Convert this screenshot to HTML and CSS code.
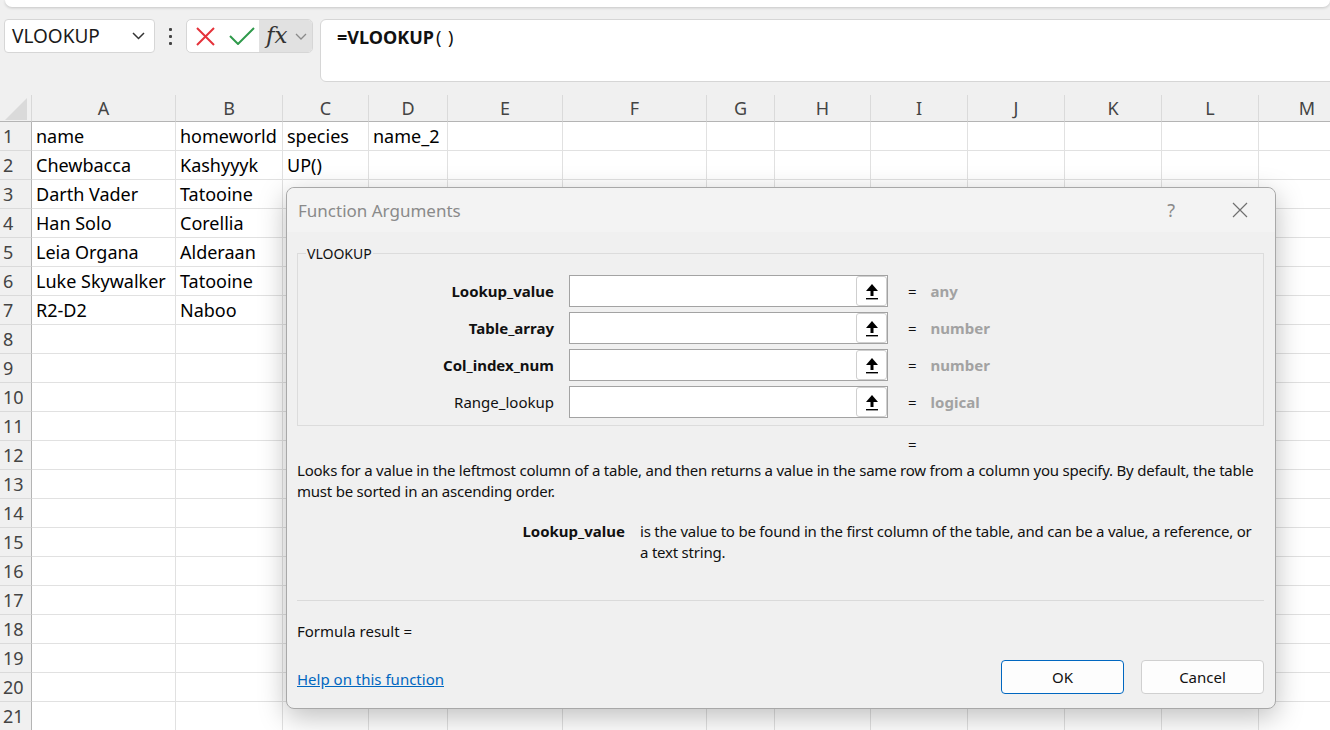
FILE: index.html
```html
<!DOCTYPE html>
<html lang="en">
<head>
<meta charset="utf-8">
<title>VLOOKUP - Function Arguments</title>
<link rel="stylesheet" href="styles.css">
</head>
<body>
<div class="topbar"></div>

<div class="fbar">
  <div class="namebox">
    <span>VLOOKUP</span>
    <svg class="chev" width="13" height="8" viewBox="0 0 13 8"><polyline points="1,1 6.5,6.5 12,1" fill="none" stroke="#333" stroke-width="1.5"/></svg>
  </div>
  <div class="kebab"><span></span><span></span><span></span></div>
  <div class="fbtns">
    <div class="fb-x"><svg width="19" height="19" viewBox="0 0 19 19"><path d="M1 1 L18 18 M18 1 L1 18" stroke="#e5323a" stroke-width="2" fill="none"/></svg></div>
    <div class="fb-ok"><svg width="26" height="18" viewBox="0 0 26 18"><polyline points="1,9 9,17 25,1" fill="none" stroke="#2f9a4b" stroke-width="2"/></svg></div>
    <div class="fb-fx"><span class="fx">fx</span><svg width="12" height="7" viewBox="0 0 12 7"><polyline points="1,1 6,6 11,1" fill="none" stroke="#8a8a8a" stroke-width="1.3"/></svg></div>
  </div>
  <div class="finput"><b>=VLOOKUP</b><span class="paren">( )</span></div>
</div>

<div class="sheet">
  <div class="corner"><svg width="22" height="22" viewBox="0 0 22 22"><polygon points="0,22 22,0 22,22" fill="#dadada"/></svg></div>
  <div class="ch">A</div><div class="ch">B</div><div class="ch">C</div><div class="ch">D</div><div class="ch">E</div><div class="ch">F</div><div class="ch">G</div><div class="ch">H</div><div class="ch">I</div><div class="ch">J</div><div class="ch">K</div><div class="ch">L</div><div class="ch">M</div>

  <div class="rh">1</div><div>name</div><div>homeworld</div><div>species</div><div>name_2</div><div></div><div></div><div></div><div></div><div></div><div></div><div></div><div></div><div></div>
  <div class="rh">2</div><div>Chewbacca</div><div>Kashyyyk</div><div>UP()</div><div></div><div></div><div></div><div></div><div></div><div></div><div></div><div></div><div></div><div></div>
  <div class="rh">3</div><div>Darth Vader</div><div>Tatooine</div><div></div><div></div><div></div><div></div><div></div><div></div><div></div><div></div><div></div><div></div><div></div>
  <div class="rh">4</div><div>Han Solo</div><div>Corellia</div><div></div><div></div><div></div><div></div><div></div><div></div><div></div><div></div><div></div><div></div><div></div>
  <div class="rh">5</div><div>Leia Organa</div><div>Alderaan</div><div></div><div></div><div></div><div></div><div></div><div></div><div></div><div></div><div></div><div></div><div></div>
  <div class="rh">6</div><div>Luke Skywalker</div><div>Tatooine</div><div></div><div></div><div></div><div></div><div></div><div></div><div></div><div></div><div></div><div></div><div></div>
  <div class="rh">7</div><div>R2-D2</div><div>Naboo</div><div></div><div></div><div></div><div></div><div></div><div></div><div></div><div></div><div></div><div></div><div></div>
  <div class="rh">8</div><div></div><div></div><div></div><div></div><div></div><div></div><div></div><div></div><div></div><div></div><div></div><div></div><div></div>
  <div class="rh">9</div><div></div><div></div><div></div><div></div><div></div><div></div><div></div><div></div><div></div><div></div><div></div><div></div><div></div>
  <div class="rh">10</div><div></div><div></div><div></div><div></div><div></div><div></div><div></div><div></div><div></div><div></div><div></div><div></div><div></div>
  <div class="rh">11</div><div></div><div></div><div></div><div></div><div></div><div></div><div></div><div></div><div></div><div></div><div></div><div></div><div></div>
  <div class="rh">12</div><div></div><div></div><div></div><div></div><div></div><div></div><div></div><div></div><div></div><div></div><div></div><div></div><div></div>
  <div class="rh">13</div><div></div><div></div><div></div><div></div><div></div><div></div><div></div><div></div><div></div><div></div><div></div><div></div><div></div>
  <div class="rh">14</div><div></div><div></div><div></div><div></div><div></div><div></div><div></div><div></div><div></div><div></div><div></div><div></div><div></div>
  <div class="rh">15</div><div></div><div></div><div></div><div></div><div></div><div></div><div></div><div></div><div></div><div></div><div></div><div></div><div></div>
  <div class="rh">16</div><div></div><div></div><div></div><div></div><div></div><div></div><div></div><div></div><div></div><div></div><div></div><div></div><div></div>
  <div class="rh">17</div><div></div><div></div><div></div><div></div><div></div><div></div><div></div><div></div><div></div><div></div><div></div><div></div><div></div>
  <div class="rh">18</div><div></div><div></div><div></div><div></div><div></div><div></div><div></div><div></div><div></div><div></div><div></div><div></div><div></div>
  <div class="rh">19</div><div></div><div></div><div></div><div></div><div></div><div></div><div></div><div></div><div></div><div></div><div></div><div></div><div></div>
  <div class="rh">20</div><div></div><div></div><div></div><div></div><div></div><div></div><div></div><div></div><div></div><div></div><div></div><div></div><div></div>
  <div class="rh">21</div><div></div><div></div><div></div><div></div><div></div><div></div><div></div><div></div><div></div><div></div><div></div><div></div><div></div>
</div>

<div class="dlg">
  <div class="dlg-title">
    <span class="dlg-name">Function Arguments</span>
    <span class="dlg-help">?</span>
    <svg class="dlg-close" width="16" height="16" viewBox="0 0 16 16"><path d="M1 1 L15 15 M15 1 L1 15" stroke="#6f6f6f" stroke-width="1.2" fill="none"/></svg>
  </div>
  <div class="dlg-body">
    <fieldset class="group">
      <legend>VLOOKUP</legend>
      <div class="args">
        <label class="bold">Lookup_value</label>
        <div class="inp"><span class="ref"><svg width="14" height="17" viewBox="0 0 14 17"><polygon points="7,1 1,8 13,8" fill="#000"/><rect x="5.5" y="7" width="3" height="6" fill="#000"/><rect x="1" y="15" width="12" height="1.4" fill="#000"/></svg></span></div>
        <div class="res"><span class="eq">=</span><span class="type">any</span></div>

        <label class="bold">Table_array</label>
        <div class="inp"><span class="ref"><svg width="14" height="17" viewBox="0 0 14 17"><polygon points="7,1 1,8 13,8" fill="#000"/><rect x="5.5" y="7" width="3" height="6" fill="#000"/><rect x="1" y="15" width="12" height="1.4" fill="#000"/></svg></span></div>
        <div class="res"><span class="eq">=</span><span class="type">number</span></div>

        <label class="bold">Col_index_num</label>
        <div class="inp"><span class="ref"><svg width="14" height="17" viewBox="0 0 14 17"><polygon points="7,1 1,8 13,8" fill="#000"/><rect x="5.5" y="7" width="3" height="6" fill="#000"/><rect x="1" y="15" width="12" height="1.4" fill="#000"/></svg></span></div>
        <div class="res"><span class="eq">=</span><span class="type">number</span></div>

        <label>Range_lookup</label>
        <div class="inp"><span class="ref"><svg width="14" height="17" viewBox="0 0 14 17"><polygon points="7,1 1,8 13,8" fill="#000"/><rect x="5.5" y="7" width="3" height="6" fill="#000"/><rect x="1" y="15" width="12" height="1.4" fill="#000"/></svg></span></div>
        <div class="res"><span class="eq">=</span><span class="type">logical</span></div>
      </div>
    </fieldset>

    <div class="eqline">=</div>

    <p class="desc">Looks for a value in the leftmost column of a table, and then returns a value in the same row from a column you specify. By default, the table must be sorted in an ascending order.</p>

    <div class="param">
      <span class="pname">Lookup_value</span>
      <span class="ptext">is the value to be found in the first column of the table, and can be a value, a reference, or a text string.</span>
    </div>

    <div class="sep"></div>

    <div class="fresult">Formula result =</div>

    <div class="footer">
      <a class="help" href="#">Help on this function</a>
      <button class="btn ok">OK</button>
      <button class="btn">Cancel</button>
    </div>
  </div>
</div>
</body>
</html>
```

FILE: styles.css
```css
html, body {
  margin: 0;
  padding: 0;
}
body {
  width: 1330px;
  height: 730px;
  overflow: hidden;
  position: relative;
  background: #f0f0f0;
  font-family: "Noto Sans", "Open Sans", sans-serif;
  color: #111;
}

/* top ribbon remnant */
.topbar {
  height: 7px;
  margin-left: 5px;
  background: #fff;
  border-radius: 0 0 8px 8px;
  box-shadow: 0 1px 3px rgba(0, 0, 0, 0.18);
}

/* formula bar */
.fbar {
  display: flex;
  align-items: flex-start;
  height: 63px;
  margin: 12px 0 13px 4px;
}
.fbar > * {
  flex-shrink: 0;
}
.namebox {
  box-sizing: border-box;
  width: 151px;
  height: 34px;
  background: #fff;
  border: 1px solid #d6d6d6;
  border-radius: 4px;
  display: flex;
  align-items: center;
  justify-content: space-between;
  padding: 0 9px 0 7px;
  font-size: 19px;
  color: #1a1a1a;
}
.kebab {
  width: 31px;
  height: 34px;
  display: flex;
  flex-direction: column;
  align-items: center;
  justify-content: center;
  gap: 4px;
}
.kebab span {
  width: 3px;
  height: 3px;
  background: #444;
  border-radius: 1px;
}
.fbtns {
  box-sizing: border-box;
  width: 127px;
  height: 34px;
  background: #fff;
  border: 1px solid #d6d6d6;
  border-radius: 5px;
  display: flex;
  overflow: hidden;
}
.fb-x {
  width: 37px;
  display: flex;
  align-items: center;
  justify-content: center;
}
.fb-ok {
  width: 35px;
  display: flex;
  align-items: center;
  justify-content: center;
}
.fb-fx {
  flex: 1;
  background: #e1e1e1;
  display: flex;
  align-items: center;
  padding-left: 7px;
  gap: 8px;
}
.fx {
  font-family: "DejaVu Serif", "Liberation Serif", serif;
  font-style: italic;
  font-size: 23px;
  color: #333;
  line-height: 1;
  margin-top: -2px;
}
.finput {
  box-sizing: border-box;
  width: 1030px;
  height: 63px;
  margin-left: 7px;
  background: #fff;
  border: 1px solid #d6d6d6;
  border-radius: 6px;
  padding: 5px 16px;
  font-size: 18px;
  line-height: 24px;
  color: #111;
}
.finput b {
  font-weight: 700;
}
.paren {
  margin-left: 2px;
  letter-spacing: 1px;
}

/* sheet grid */
.sheet {
  display: grid;
  grid-template-columns: 32px 144px 107px 86px 79px 115px 144px 68px 96px 97px 97px 97px 97px 97px;
  grid-template-rows: 27px;
  grid-auto-rows: 29px;
  width: 1356px;
  font-size: 18px;
}
.sheet > div {
  box-sizing: border-box;
  background: #fff;
  border-right: 1px solid #e1e1e1;
  border-bottom: 1px solid #e1e1e1;
  padding-left: 4px;
  line-height: 29px;
  white-space: nowrap;
  color: #000;
}
.sheet > .corner {
  background: #f0f0f0;
  border-right: 1px solid #d8d8d8;
  border-bottom: 1px solid #b4b4b4;
  padding: 3px 0 0 5px;
}
.corner svg {
  display: block;
}
.sheet > .ch {
  background: #f0f0f0;
  border-right: 1px solid #dadada;
  border-bottom: 1px solid #b4b4b4;
  padding-left: 0;
  text-align: center;
  line-height: 27px;
  color: #444;
}
.sheet > .rh {
  background: #f0f0f0;
  border-right: 1px solid #b4b4b4;
  border-bottom: 1px solid #dadada;
  padding-left: 3px;
  color: #444;
}

/* dialog */
.dlg {
  position: absolute;
  left: 286px;
  top: 187px;
  width: 990px;
  height: 522px;
  box-sizing: border-box;
  background: #f0f0f0;
  border: 1px solid #a8a8a8;
  border-radius: 8px;
  box-shadow: 0 8px 28px rgba(0, 0, 0, 0.26);
  font-size: 15px;
  color: #111;
}
.dlg-title {
  height: 44px;
  background: #f3f3f3;
  border-radius: 8px 8px 0 0;
  display: flex;
  align-items: center;
  padding-left: 11px;
  color: #8a8a8a;
}
.dlg-name {
  font-size: 17px;
  flex: 1;
}
.dlg-help {
  font-size: 18px;
  color: #8a8a8a;
  margin-right: 57px;
}
.dlg-close {
  margin-right: 27px;
}
.dlg-body {
  padding: 0 11px 0 10px;
}
.group {
  margin: 12px 0 0;
  padding: 13px 0 7px;
  border: 1px solid #dcdcdc;
  min-width: 0;
}
.group legend {
  margin-left: 8px;
  padding: 2px 1px 0;
  font-size: 14px;
  line-height: 16px;
  color: #111;
}
.args {
  display: grid;
  grid-template-columns: 256px 319px 1fr;
  column-gap: 15px;
  row-gap: 5px;
  align-items: center;
}
.args label {
  text-align: right;
}
.args .bold {
  font-weight: 700;
}
.inp {
  box-sizing: border-box;
  height: 32px;
  background: #fff;
  border: 1px solid #a3a3a3;
  display: flex;
  justify-content: flex-end;
}
.ref {
  box-sizing: border-box;
  width: 31px;
  height: 30px;
  background: #fff;
  border: 1px solid #cfcfcf;
  border-radius: 3px;
  display: flex;
  align-items: center;
  justify-content: center;
}
.res {
  padding-left: 5px;
  display: flex;
  gap: 14px;
}
.type {
  font-weight: 700;
  color: #a2a2a2;
}
.eqline {
  margin-top: 8px;
  height: 20px;
  line-height: 20px;
  padding-left: 611px;
}
.desc {
  margin: 6px 0 0;
  line-height: 21px;
  letter-spacing: -0.22px;
}
.param {
  margin-top: 17px;
  display: grid;
  grid-template-columns: 328px 1fr;
  column-gap: 15px;
  line-height: 21px;
  padding-top: 2px;
}
.pname {
  text-align: right;
  font-weight: 700;
}
.ptext {
  padding-right: 8px;
  letter-spacing: -0.22px;
}
.sep {
  margin-top: 37px;
  border-top: 1px solid #dadada;
}
.fresult {
  margin-top: 20px;
  line-height: 20px;
}
.footer {
  margin-top: 19px;
  display: flex;
  align-items: center;
  gap: 17px;
}
.help {
  flex: 1;
  color: #0067c0;
  text-decoration: underline;
  padding-top: 3px;
}
.btn {
  width: 123px;
  height: 34px;
  background: #fdfdfd;
  border: 1px solid #d0d0d0;
  border-radius: 4px;
  font-family: inherit;
  font-size: 15px;
  color: #111;
  padding: 0;
}
.btn.ok {
  border-color: #0067c0;
}
```
